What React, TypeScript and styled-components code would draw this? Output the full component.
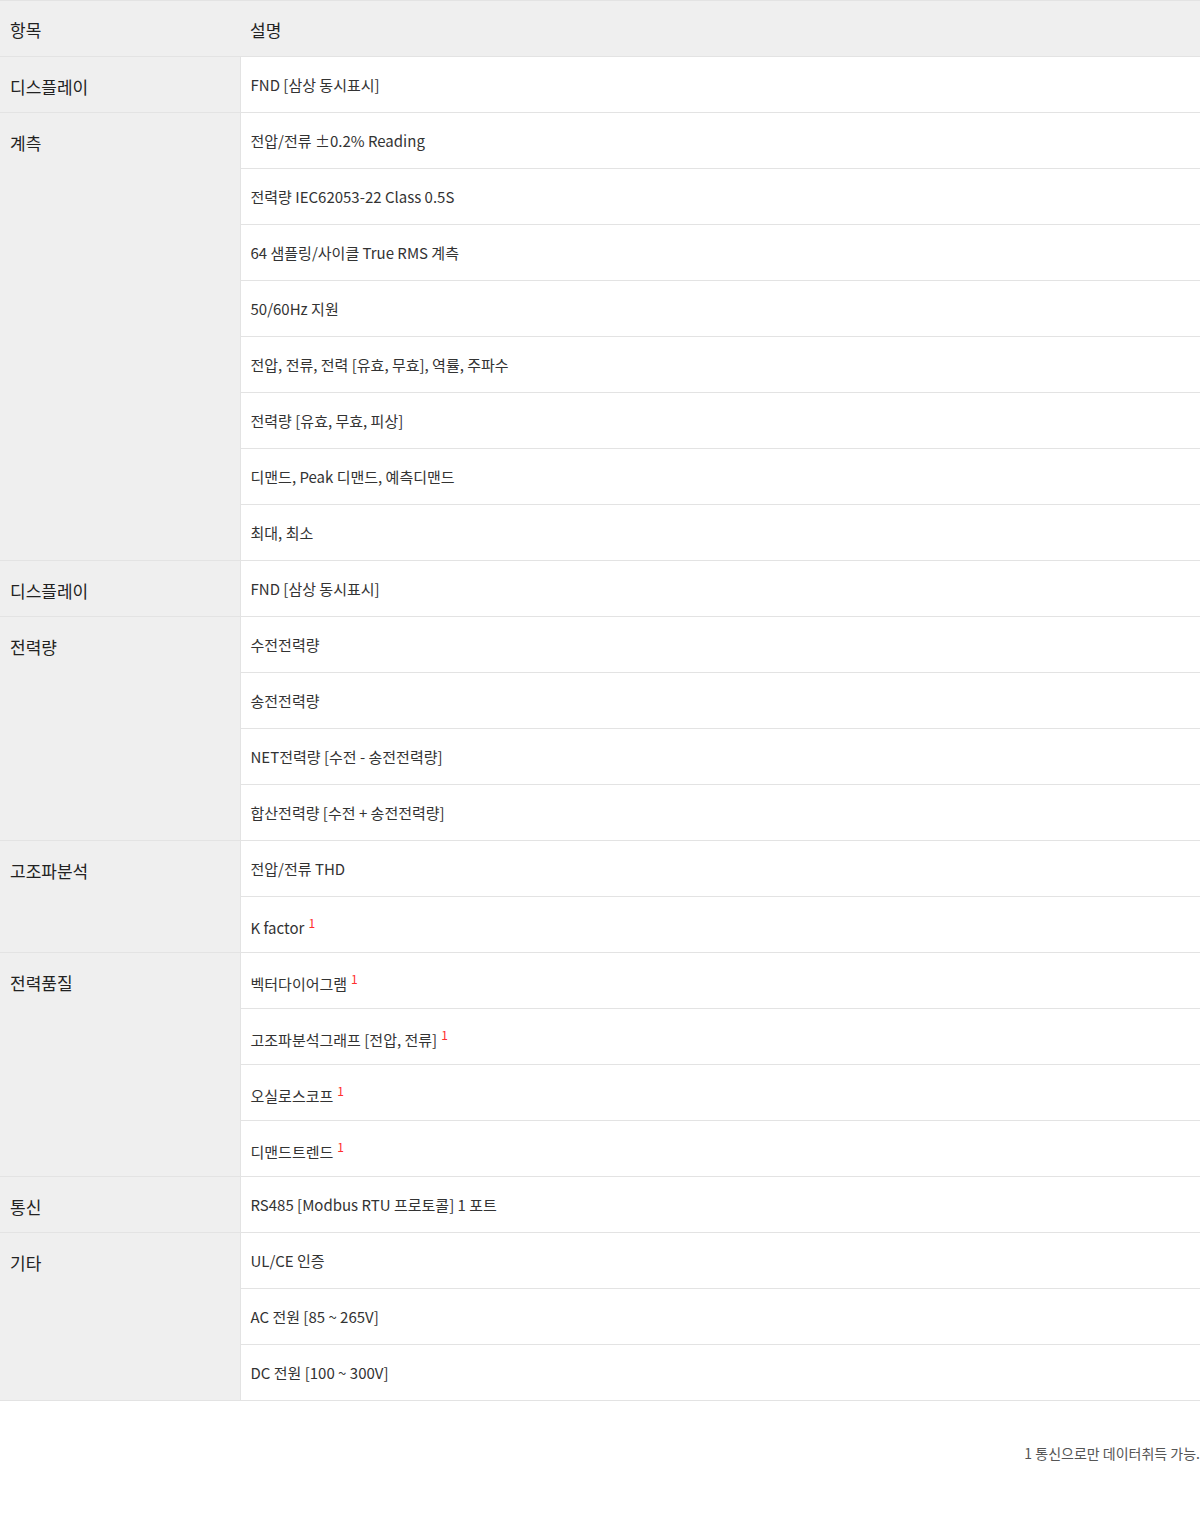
import React from "react";
import styled, { createGlobalStyle } from "styled-components";

const GlobalStyle = createGlobalStyle`
  body {
    margin: 0;
    background: #ffffff;
    font-family: "Noto Sans CJK KR", "Noto Sans", sans-serif;
  }
`;

const Wrapper = styled.div`
  width: 1200px;
`;

const Table = styled.table`
  width: 100%;
  border-collapse: collapse;
  table-layout: fixed;
  border-top: 1px solid #e3e3e3;
`;

const HeadCell = styled.th<{ $narrow?: boolean }>`
  width: ${(p) => (p.$narrow ? "240px" : "auto")};
  height: 56px;
  padding: 2px 10px 0;
  box-sizing: border-box;
  background: #efefef;
  border-bottom: 1px solid #e3e3e3;
  text-align: left;
  font-size: 17px;
  font-weight: 400;
  color: #222;
`;

const Label = styled.td`
  width: 240px;
  padding: 18px 10px 0;
  box-sizing: border-box;
  vertical-align: top;
  background: #efefef;
  border-bottom: 1px solid #e3e3e3;
  border-right: 1px solid #e3e3e3;
  font-size: 17px;
  font-weight: 400;
  color: #222;
  line-height: 24px;
`;

const Desc = styled.td`
  height: 56px;
  padding: 1px 10px 0;
  box-sizing: border-box;
  border-bottom: 1px solid #e3e3e3;
  font-size: 15px;
  color: #333;
  line-height: 22px;
`;

const Note = styled.sup`
  color: #ff2e2e;
  font-size: 12px;
  margin-left: 4px;
`;

const Footnote = styled.p`
  margin: 42px 0 0;
  text-align: right;
  font-size: 14px;
  color: #555;
`;

type Item = { text: string; note?: boolean };
type Group = { label: string; items: Item[] };

const groups: Group[] = [
  { label: "디스플레이", items: [{ text: "FND [삼상 동시표시]" }] },
  {
    label: "계측",
    items: [
      { text: "전압/전류 ±0.2% Reading" },
      { text: "전력량 IEC62053-22 Class 0.5S" },
      { text: "64 샘플링/사이클 True RMS 계측" },
      { text: "50/60Hz 지원" },
      { text: "전압, 전류, 전력 [유효, 무효], 역률, 주파수" },
      { text: "전력량 [유효, 무효, 피상]" },
      { text: "디맨드, Peak 디맨드, 예측디맨드" },
      { text: "최대, 최소" },
    ],
  },
  { label: "디스플레이", items: [{ text: "FND [삼상 동시표시]" }] },
  {
    label: "전력량",
    items: [
      { text: "수전전력량" },
      { text: "송전전력량" },
      { text: "NET전력량 [수전 - 송전전력량]" },
      { text: "합산전력량 [수전 + 송전전력량]" },
    ],
  },
  {
    label: "고조파분석",
    items: [{ text: "전압/전류 THD" }, { text: "K factor", note: true }],
  },
  {
    label: "전력품질",
    items: [
      { text: "벡터다이어그램", note: true },
      { text: "고조파분석그래프 [전압, 전류]", note: true },
      { text: "오실로스코프", note: true },
      { text: "디맨드트렌드", note: true },
    ],
  },
  { label: "통신", items: [{ text: "RS485 [Modbus RTU 프로토콜] 1 포트" }] },
  {
    label: "기타",
    items: [
      { text: "UL/CE 인증" },
      { text: "AC 전원 [85 ~ 265V]" },
      { text: "DC 전원 [100 ~ 300V]" },
    ],
  },
];

const App = () => (
  <Wrapper>
    <GlobalStyle />
    <Table>
      <thead>
        <tr>
          <HeadCell $narrow>항목</HeadCell>
          <HeadCell>설명</HeadCell>
        </tr>
      </thead>
      <tbody>
        {groups.map((g, gi) =>
          g.items.map((item, i) => (
            <tr key={`${gi}-${i}`}>
              {i === 0 && <Label rowSpan={g.items.length}>{g.label}</Label>}
              <Desc>
                {item.text}
                {item.note && <Note>1</Note>}
              </Desc>
            </tr>
          ))
        )}
      </tbody>
    </Table>
    <Footnote>1 통신으로만 데이터취득 가능.</Footnote>
  </Wrapper>
);

export default App;
